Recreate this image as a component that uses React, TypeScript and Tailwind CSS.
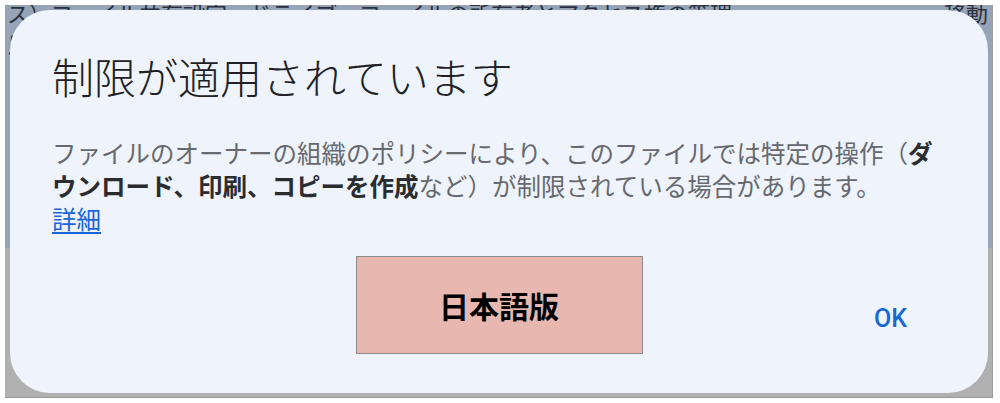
import React from "react";

export default function App() {
  const jp = { fontFamily: '"Noto Sans CJK JP", "Noto Sans", sans-serif' } as React.CSSProperties;
  return (
    <div className="w-[1000px] h-[403px] bg-white pl-[5px] pt-[5px] overflow-hidden" style={jp}>
      <div className="relative w-[988px] h-[393px] overflow-hidden border-r border-b border-[#9a9a9a] bg-[linear-gradient(to_bottom,#97a3b7_0%,#97a3b7_62%,#b0b0b0_62%,#b0b0b0_100%)]">
        {/* background page content */}
        <div className="flex flex-col -mt-[8px] pl-[2px] text-[22px] leading-[30px] text-[#2a303c] whitespace-nowrap">
          <div className="flex justify-between pr-[4px]">
            <span>ス）ファイル共有設定・ドライブ・ファイルの所有者とアクセス権の管理</span>
            <span>移動</span>
          </div>
          <div>良</div>
        </div>

        {/* dialog overlay */}
        <div className="absolute left-[5px] top-[5px] w-[978px] h-[383px] rounded-[40px] bg-[#eef3fc] flex flex-col pt-[42px] px-[42px]">
          <h1 className="text-[42px] leading-[48px] text-[#202124] font-light whitespace-nowrap">
            制限が適用されています
          </h1>
          <p className="mt-[36px] text-[24.5px] leading-[33px] text-[#66696e] whitespace-nowrap">
            ファイルのオーナーの組織のポリシーにより、このファイルでは特定の操作（<b className="font-bold text-[#2b2c30]">ダ</b>
            <br />
            <b className="font-bold text-[#2b2c30]">ウンロード、印刷、コピーを作成</b>など）が制限されている場合があります。
            <br />
            <a className="text-[#1a66d9] underline underline-offset-[3px]">詳細</a>
          </p>
          <div className="mt-[21px] grid grid-cols-[1fr_auto_1fr]">
            <div />
            <div className="w-[287px] h-[98px] bg-[#e8b8b0] border border-[#8a8a8a] flex items-center justify-center text-[30px] font-bold text-black">
              日本語版
            </div>
            <div className="flex justify-end items-start pt-[48px] pr-[39px]">
              <span className="text-[25px] leading-[30px] font-medium text-[#1967d2]" style={{ fontFamily: 'Roboto, "Liberation Sans", sans-serif' }}>
                OK
              </span>
            </div>
          </div>
        </div>
      </div>
    </div>
  );
}
